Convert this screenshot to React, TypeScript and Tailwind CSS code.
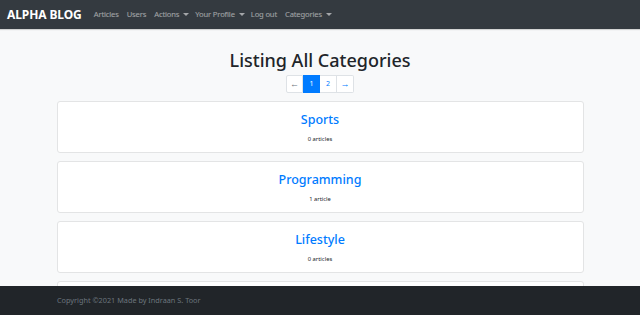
const NAV = [
  { label: "Articles" },
  { label: "Users" },
  { label: "Actions", caret: true },
  { label: "Your Profile", caret: true },
  { label: "Log out" },
  { label: "Categories", caret: true },
];

const CATEGORIES = [
  { name: "Sports", count: "0 articles" },
  { name: "Programming", count: "1 article" },
  { name: "Lifestyle", count: "0 articles" },
];

function Caret() {
  return <span className="mr-[-2px] ml-[4px] inline-block border-x-[3px] border-t-[3px] border-x-transparent border-t-current align-middle" />;
}

export default function App() {
  return (
    <div className="flex h-screen flex-col overflow-hidden bg-[#f8f9fa] font-['Noto_Sans',sans-serif]">
      {/* Navbar */}
      <nav className="flex h-[29px] shrink-0 items-center bg-[#343a40] pl-[7px] shadow-[0_1px_1px_rgba(0,0,0,0.15)]">
        <span className="mr-[12px] text-[12px] font-bold tracking-[-0.1px] text-white">ALPHA BLOG</span>
        <ul className="flex items-center gap-[8px] text-[7.6px] tracking-[-0.15px] text-white/55">
          {NAV.map(n => (
            <li key={n.label} className="flex items-center">
              {n.label}
              {n.caret && <Caret />}
            </li>
          ))}
        </ul>
      </nav>

      {/* Content */}
      <main className="flex-1 overflow-hidden">
        <h1 className="mt-[17px] text-center text-[18px] font-medium leading-[28px] text-[#212529]">
          Listing All Categories
        </h1>
        <div className="mt-[1px] flex justify-center">
          <div className="flex h-[18px] text-[7px]">
            <span className="flex w-[17px] items-center justify-center rounded-l-[2px] border border-[#dee2e6] bg-white text-[9px] text-[#6c757d]">&larr;</span>
            <span className="flex w-[17px] items-center justify-center border border-[#007bff] bg-[#007bff] text-white">1</span>
            <span className="flex w-[17px] items-center justify-center border border-l-0 border-[#dee2e6] bg-white text-[#007bff]">2</span>
            <span className="flex w-[17px] items-center justify-center rounded-r-[2px] border border-l-0 border-[#dee2e6] bg-white text-[9px] text-[#007bff]">&rarr;</span>
          </div>
        </div>

        <div className="mx-auto mt-[8px] flex w-[527px] flex-col gap-[8px]">
          {CATEGORIES.map(c => (
            <div key={c.name} className="flex h-[52px] shrink-0 flex-col items-center rounded-[3px] border border-[#e3e4e5] bg-white">
              <span className="mt-[9px] text-[12.5px] font-medium leading-[18px] text-[#007bff]">{c.name}</span>
              <span className="mt-[6px] text-[5.8px] text-[#212529]">{c.count}</span>
            </div>
          ))}
          {/* next card, hidden behind the footer */}
          <div className="h-[52px] shrink-0 rounded-[3px] border border-[#e3e4e5] bg-white" />
        </div>
      </main>

      {/* Footer */}
      <footer className="flex h-[29px] shrink-0 items-center bg-[#212529] pl-[57px]">
        <span className="text-[7.3px] text-[#6c757d]">Copyright &copy;2021 Made by Indraan S. Toor</span>
      </footer>
    </div>
  );
}
